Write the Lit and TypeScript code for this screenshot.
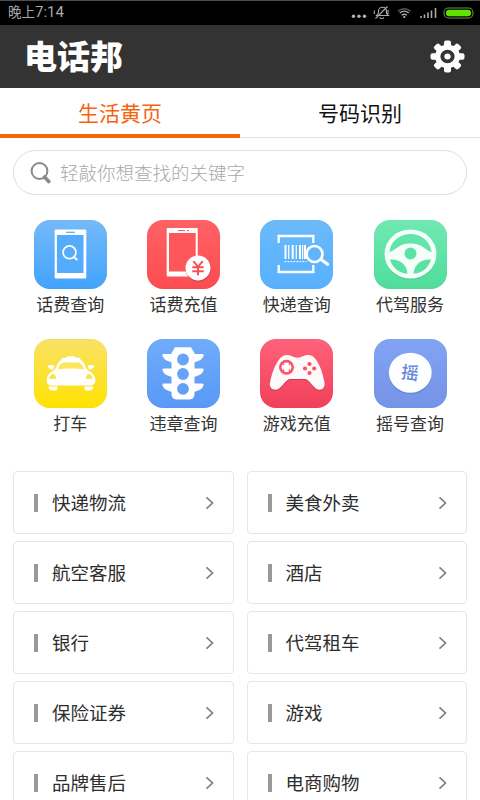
import { LitElement, html, svg, css, type TemplateResult } from "lit";
import { customElement, property } from "lit/decorators.js";

const services: { id: string; label: string; art: TemplateResult }[] = [
  {
    id: "query",
    label: "话费查询",
    art: svg`
      <rect x="20.700" y="9.500" width="31.600" height="49" rx="1" fill="#fff"/>
      <rect x="22.900" y="15" width="26.600" height="38" fill="#54acfb"/>
      <path d="M32 12.300h9" stroke="#54acfb" stroke-width="1.200"/>
      <circle cx="35.500" cy="32.300" r="6.400" fill="none" stroke="#fff" stroke-width="1.700"/>
      <path d="M39.600 36.500l3.700 3.700" stroke="#fff" stroke-width="1.900"/>`,
  },
  {
    id: "recharge",
    label: "话费充值",
    art: svg`
      <rect x="19.700" y="8" width="31" height="48.500" rx="1" fill="#fff"/>
      <rect x="22" y="13" width="26.700" height="38.500" fill="#fd575b"/>
      <path d="M31 10.500h7M40 10.500h2" stroke="#fd575b" stroke-width="1.200"/>
      <circle cx="51.400" cy="49" r="12.700" fill="#d93e45"/>
      <circle cx="51" cy="48" r="12.500" fill="#fff"/>
      <path d="M46.300 41.200l4.700 5.600 4.700-5.600M51 46.500v8.800M45.300 47.200h11.400M45.300 51.200h11.400" fill="none" stroke="#f84f55" stroke-width="2"/>`,
  },
  {
    id: "express",
    label: "快递查询",
    art: svg`
      <path d="M18.700 23v-7h34.600v7M18.700 45v7h34.600v-7" fill="none" stroke="#fff" stroke-width="2.300"/>
      <path d="M25.500 25v14M32.700 25v14M40 25v14M45 25v14" stroke="#fff" stroke-width="2"/>
      <path d="M28.700 25v14M36.300 25v14M42.600 25v14" stroke="#fff" stroke-width="1.200"/>
      <path d="M24.500 41.600h22" stroke="#fff" stroke-width="1" stroke-dasharray="1.800 1.200"/>
      <circle cx="54.500" cy="34" r="8" fill="#61b5fc" stroke="#fff" stroke-width="2.700"/>
      <path d="M60.800 39.300l6.800 5" stroke="#fff" stroke-width="3.200" stroke-linecap="round"/>`,
  },
  {
    id: "driver",
    label: "代驾服务",
    art: svg`
      <ellipse cx="36.500" cy="35" rx="26" ry="24.500" fill="#45cf91"/>
      <ellipse cx="36.500" cy="34" rx="26" ry="24.500" fill="#f5fffa"/>
      <path d="M15.300 32C17 20.500 26 14 36.500 14S56 20.500 57.700 32C51 30.500 49 23.500 36.500 23.500S22 30.500 15.300 32z" fill="#63e5aa"/>
      <path d="M16 39.500C25 38.500 33 44 33.500 53.800 24 53 18 47 16 39.500z" fill="#5ce1a4"/>
      <path d="M57 39.500C48 38.500 40 44 39.500 53.800 49 53 55 47 57 39.500z" fill="#5ce1a4"/>
      <circle cx="36.500" cy="33.500" r="6" fill="#5fe2a7"/>`,
  },
  {
    id: "taxi",
    label: "打车",
    art: svg`
      <path d="M14.500 47.500h9v2q0 2-2 2h-4q-2 0-3-3.500zM50.500 47.500h9q-1 4-3 4h-4q-2 0-2-2z" fill="#fff"/>
      <path d="M27 21.200l1.500-2.500h4l.7-1.500h7.600l.7 1.500h4l1.500 2.500z" fill="#fff"/>
      <path d="M22 29C24 22.500 26.500 20 31 20h12c4.500 0 7 2.500 9 9l3 3c4 2.200 6.300 5 6.300 9.300 0 3.900-2 5.200-5 5.200H17.700c-3 0-5-1.300-5-5.200 0-4.300 2.300-7.100 6.300-9.300z" fill="#fff"/>
      <path d="M23.800 30.500c1.500-4.800 3.700-7 7.200-7h12c3.500 0 5.700 2.200 7.200 7-8-1.400-18.400-1.400-26.400 0z" fill="#fde55c"/>
      <path d="M13.500 27.300q3.500-2.200 7-.3l-1.500 3.500q-4-.2-5.500-3.200zM60.500 27.300q-3.500-2.200-7-.3l1.500 3.500q4-.2 5.500-3.200z" fill="#fff"/>
      <path d="M15.300 39.800q.5-5 5-4.800 2.200 2.800 1.400 5zM58.700 39.800q-.5-5-5-4.800-2.200 2.800-1.400 5z" fill="#f9e34d"/>`,
  },
  {
    id: "violation",
    label: "违章查询",
    art: svg`
      <g fill="#fff">
        <path d="M28 8.200h16l3.500 6V55q0 5-5 5.500H29.500q-5-.5-5-5.500V14.200z"/>
        <path d="M25 15h-8.500q-1.500 0-1 2 1.500 4.500 9.500 6.500zM47 15h8.500q1.500 0 1 2-1.500 4.500-9.500 6.500z"/>
        <path d="M25 29.500h-8.500q-1.500 0-1 2 1.500 4.500 9.500 6.500zM47 29.500h8.500q1.500 0 1 2-1.500 4.500-9.500 6.500z"/>
        <path d="M25 44.500h-8.500q-1.500 0-1 2 1.500 4.500 9.500 6.500zM47 44.500h8.500q1.500 0 1 2-1.500 4.500-9.500 6.500z"/>
      </g>
      <circle cx="36" cy="20.500" r="5.900" fill="#67a5fa"/>
      <circle cx="36" cy="35" r="5.900" fill="#64a3f9"/>
      <circle cx="36" cy="49.800" r="5.900" fill="#60a0f7"/>`,
  },
  {
    id: "game",
    label: "游戏充值",
    art: svg`
      <path d="M22 17.500c3-2 7-2 10-.2 3.500 1.800 7.500 1.800 11 0 3-1.800 7-1.800 10 .2 5 3.500 10 16 11.500 26 .8 5.500-2.500 8-6.500 7-5-1.500-8-10-13-10.500H30c-5 .5-8 9-13 10.500-4 1-8-1.500-7-7 1.700-10 7-22.500 12-26z" fill="#d43852" transform="translate(0 1)"/>
      <path d="M22 17.500c3-2 7-2 10-.2 3.500 1.800 7.500 1.800 11 0 3-1.800 7-1.800 10 .2 5 3.500 10 16 11.500 26 .8 5.500-2.500 8-6.500 7-5-1.500-8-10-13-10.500H30c-5 .5-8 9-13 10.500-4 1-8-1.500-7-7 1.700-10 7-22.500 12-26z" fill="#fffafa"/>
      <circle cx="26.500" cy="28.300" r="7.500" fill="#fb5269"/>
      <circle cx="26.500" cy="28.300" r="4.900" fill="#fff"/>
      <path d="M23 24.800l1 1M30 24.800l-1 1M23 31.800l1-1M30 31.800l-1-1" stroke="#fb5269" stroke-width="1.600"/>
      <circle cx="49.500" cy="25" r="2.100" fill="#fb5269"/><circle cx="49.500" cy="34" r="2.100" fill="#fb5269"/>
      <circle cx="45" cy="29.500" r="2.100" fill="#fb5269"/><circle cx="54.200" cy="29.500" r="2.100" fill="#fb5269"/>`,
  },
  {
    id: "lottery",
    label: "摇号查询",
    art: svg`
      <ellipse cx="36.300" cy="35" rx="21.400" ry="20" fill="#6685d3"/>
      <ellipse cx="36.300" cy="33.700" rx="21.400" ry="20" fill="#fdfeff"/>
      <text class="glyph" x="36" y="40" text-anchor="middle" transform="rotate(7 36 34)">摇</text>`,
  },
];

const categories = [
  "快递物流", "美食外卖",
  "航空客服", "酒店",
  "银行", "代驾租车",
  "保险证券", "游戏",
  "品牌售后", "电商购物",
];

@customElement("status-bar")
class StatusBar extends LitElement {
  static styles = css`
    :host {
      display: flex;
      justify-content: space-between;
      box-sizing: border-box;
      height: 25px;
      padding-left: 8px;
      background: #000;
      border-top: 1px solid #4a4f50;
      color: #a9a9a9;
      font-size: 15px;
      line-height: 23px;
      font-family: Roboto, "Noto Sans CJK SC", sans-serif;
    }
    .period { font-size: 13.5px; }
    svg { display: block; width: 132px; height: 24px; }
  `;
  render() {
    return html`
      <span><span class="period">晚上</span>7:14</span>
      <svg viewBox="348 1 132 24" fill="none" stroke="#a9a9a9">
        <g fill="#b4b4b4" stroke="none">
          <circle cx="353.500" cy="16.300" r="1.700"/><circle cx="359" cy="16.300" r="1.700"/><circle cx="364.500" cy="16.300" r="1.700"/>
        </g>
        <path d="M376.500 15.500l2-2.500v-2c0-5 8-5 8 0v2.500l2 2zM379.500 17.500c1 1.300 3.500 1.300 4.500 0M375.500 18.500l12-12M374.300 10.500v3.500M388 10v4" stroke-width="1.100"/>
        <path d="M398 11.200q6.300-5 12.600 0" stroke="#585858" stroke-width="1.500"/>
        <path d="M399.700 13q4.600-3.700 9.200 0M401.700 15.200q2.600-2 5.200 0" stroke-width="1.400"/>
        <circle cx="404.300" cy="17" r="1.100" fill="#bbb" stroke="none"/>
        <path d="M421 18v-2M424.500 18v-3.500M428 18v-5.500M431.500 18v-7.500M435.500 18v-10" stroke-width="1.600"/>
        <rect x="444" y="8" width="29" height="10" rx="4.500" stroke="#6d8f52" stroke-width="1.100"/>
        <rect x="446" y="9.800" width="25" height="6.500" rx="3" fill="#5ee400" stroke="none"/>
      </svg>`;
  }
}

@customElement("service-tile")
class ServiceTile extends LitElement {
  @property({ attribute: false }) item = services[0];
  static styles = css`
    :host { display: flex; flex-direction: column; align-items: center; }
    .tile { width: 73px; height: 69px; border-radius: 16px; box-shadow: inset 0 0 1px #0002; }
    .query { background: linear-gradient(#74baf8, #43a3fc); }
    .recharge { background: linear-gradient(#fd6265, #fc4c51); }
    .express { background: linear-gradient(#6bbafb, #58b0fd); }
    .driver { background: linear-gradient(#70e9b2, #51dc9b); }
    .taxi { background: linear-gradient(#f9e167, #ffe200); }
    .violation { background: linear-gradient(#70acfb, #5999f6); }
    .game { background: linear-gradient(#ff6279, #f14059); }
    .lottery { background: linear-gradient(#82a3f4, #7593e7); }
    svg { display: block; width: 73px; height: 69px; }
    .glyph { font-size: 17.5px; font-weight: 500; fill: #6686dc; }
    .label { margin-top: 2px; font-size: 17px; line-height: 25px; color: #333; white-space: nowrap; }
  `;
  render() {
    const { id, label, art } = this.item;
    return html`
      <div class="tile ${id}"><svg viewBox="0 0 73 69">${art}</svg></div>
      <span class="label">${label}</span>`;
  }
}

@customElement("category-card")
class CategoryCard extends LitElement {
  @property() label = "";
  static styles = css`
    :host {
      display: flex;
      align-items: center;
      box-sizing: border-box;
      height: 63px;
      padding: 0 18px 0 20px;
      border: 1px solid #e6e6e6;
      border-radius: 4px;
      background: #fff;
    }
    .bar { width: 4px; height: 18px; margin-right: 14px; background: #999; }
    .label { flex: 1; margin-top: -2px; font-size: 18.5px; line-height: 28px; color: #2d2d2d; }
    svg { display: block; width: 10px; height: 14px; }
  `;
  render() {
    return html`
      <span class="bar"></span>
      <span class="label">${this.label}</span>
      <svg viewBox="0 0 10 14"><path d="M1.500 1.300l6 5.700-6 5.700" fill="none" stroke="#7d7d7d" stroke-width="1.600"/></svg>`;
  }
}

@customElement("app-root")
class AppRoot extends LitElement {
  static styles = css`
    :host {
      display: block;
      width: 480px;
      height: 800px;
      overflow: hidden;
      background: #fff;
      font-family: "Noto Sans CJK SC", "Noto Sans", sans-serif;
    }
    .header {
      display: flex;
      align-items: center;
      justify-content: space-between;
      box-sizing: border-box;
      height: 63px;
      padding: 0 15px 0 24px;
      background: #333;
    }
    .title { font-size: 33px; line-height: 48px; font-weight: 900; color: #fff; margin-top: -3px; }
    .gear { display: block; width: 35px; height: 33px; margin-top: -1px; }
    .tabs { display: grid; grid-template-columns: 1fr 1fr; grid-template-rows: 50px; height: 50px; }
    .tab {
      box-sizing: border-box;
      height: 50px;
      text-align: center;
      font-size: 21px;
      line-height: 49px;
      color: #111;
      border-bottom: 1px solid #e2e2e2;
    }
    .active { color: #f7640c; border-bottom: 4px solid #f7640c; }
    .search {
      display: flex;
      align-items: center;
      box-sizing: border-box;
      height: 45px;
      margin: 12px 13px 0;
      padding-left: 16px;
      border: 1px solid #dedede;
      border-radius: 23px;
      font-size: 18.5px;
      line-height: 28px;
      color: #a8a8a8;
      font-weight: 300;
    }
    .search svg { display: block; width: 21px; height: 22px; margin-right: 9px; }
    .hint { margin-top: -2px; }
    .services {
      display: grid;
      grid-template-columns: repeat(4, 1fr);
      row-gap: 23px;
      margin: 25px 13.300px 0 13.700px;
    }
    .cards {
      display: grid;
      grid-template-columns: 221px 220.500px;
      justify-content: space-between;
      row-gap: 7px;
      margin: 36px 13px 0;
    }
  `;
  render() {
    const teeth = [0, 45, 90, 135, 180, 225, 270, 315];
    return html`
      <status-bar></status-bar>
      <header class="header">
        <span class="title">电话邦</span>
        <svg class="gear" viewBox="-17 -17 34 34" preserveAspectRatio="none">
          ${teeth.map(a => svg`<rect x="-3.400" y="-16.500" width="6.800" height="9" rx="2" fill="#fff" transform="rotate(${a})"/>`)}
          <circle r="9.500" fill="none" stroke="#fff" stroke-width="5.200"/>
          <circle r="3.100" fill="#fff"/>
        </svg>
      </header>
      <nav class="tabs">
        <div class="tab active">生活黄页</div>
        <div class="tab">号码识别</div>
      </nav>
      <div class="search">
        <svg viewBox="0 0 21 22" fill="none" stroke="#8a8a8a">
          <circle cx="9.500" cy="9" r="7.900" stroke-width="2"/>
          <path d="M14.500 15l4.300 4.500" stroke-width="3.600" stroke-linecap="round"/>
        </svg>
        <span class="hint">轻敲你想查找的关键字</span>
      </div>
      <section class="services">
        ${services.map(s => html`<service-tile .item=${s}></service-tile>`)}
      </section>
      <section class="cards">
        ${categories.map(c => html`<category-card label=${c}></category-card>`)}
      </section>`;
  }
}
